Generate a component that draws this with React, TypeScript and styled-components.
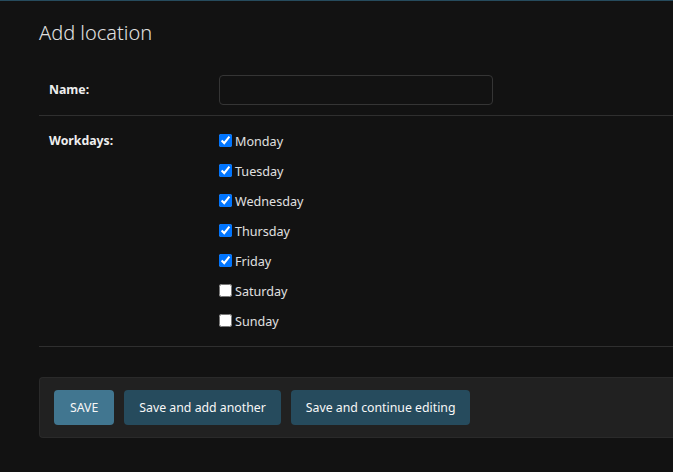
import React from "react";
import styled, { createGlobalStyle } from "styled-components";

const Global = createGlobalStyle`
  html, body { margin: 0; padding: 0; background: #121212; }
  body {
    font-family: "Noto Sans", "Open Sans", sans-serif;
    font-size: 13px;
    color: #eeeeee;
    overflow: hidden;
  }
`;

const Page = styled.div`
  border-top: 1px solid #264b5d;
  min-height: 471px;
  background: #121212;
`;

const Content = styled.div`
  padding: 20px 0 20px 39px;
`;

const Title = styled.h1`
  margin: 0 0 20px;
  font-size: 20px;
  line-height: 24px;
  font-weight: 300;
  color: #e0e0e0;
`;

const Row = styled.div`
  display: flex;
  align-items: flex-start;
  padding: 10px;
  border-bottom: 1px solid #2f2f2f;
`;

const Label = styled.label<{ $top: number }>`
  width: 170px;
  flex: none;
  padding-top: ${(p) => p.$top}px;
  font-weight: 700;
  font-size: 12.3px;
  line-height: 16px;
  color: #eeeeee;
`;

const TextInput = styled.input`
  box-sizing: border-box;
  width: 274px;
  height: 30px;
  background: #121212;
  border: 1px solid #353535;
  border-radius: 4px;
  color: #eeeeee;
  font: inherit;
  padding: 5px 6px;
  margin: 0;
`;

const List = styled.ul`
  list-style: none;
  margin: 0;
  padding: 0;
`;

const Item = styled.li`
  height: 30px;
  display: flex;
  align-items: center;
`;

const Check = styled.input`
  width: 13px;
  height: 13px;
  margin: 0 3px 0 0;
  position: relative;
  top: -1px;
`;

const ItemLabel = styled.label`
  display: flex;
  align-items: center;
  color: #e0e0e0;
  font-size: 12.6px;
`;

const Submit = styled.div`
  margin-top: 30px;
  display: flex;
  gap: 10px;
  padding: 12px 14px;
  background: #212121;
  border: 1px solid #2a2a2a;
  border-right: none;
  border-radius: 4px 0 0 4px;
`;

const Button = styled.button<{ $primary?: boolean }>`
  height: 35px;
  padding: 0 ${(p) => (p.$primary ? 16 : 15)}px;
  border: none;
  border-radius: 4px;
  background: ${(p) => (p.$primary ? "#417690" : "#264b5d")};
  color: #f7f7f7;
  font-family: inherit;
  font-size: 12.3px;
  cursor: pointer;
  text-transform: ${(p) => (p.$primary ? "uppercase" : "none")};
`;

const days = [
  ["Monday", true],
  ["Tuesday", true],
  ["Wednesday", true],
  ["Thursday", true],
  ["Friday", true],
  ["Saturday", false],
  ["Sunday", false],
] as const;

export default function App() {
  return (
    <Page>
      <Global />
      <Content>
        <Title>Add location</Title>
        <Row>
          <Label $top={7}>Name:</Label>
          <TextInput type="text" />
        </Row>
        <Row>
          <Label $top={7}>Workdays:</Label>
          <List>
            {days.map(([d, c]) => (
              <Item key={d}>
                <ItemLabel>
                  <Check type="checkbox" defaultChecked={c} />
                  {d}
                </ItemLabel>
              </Item>
            ))}
          </List>
        </Row>
        <Submit>
          <Button $primary>Save</Button>
          <Button>Save and add another</Button>
          <Button>Save and continue editing</Button>
        </Submit>
      </Content>
    </Page>
  );
}
